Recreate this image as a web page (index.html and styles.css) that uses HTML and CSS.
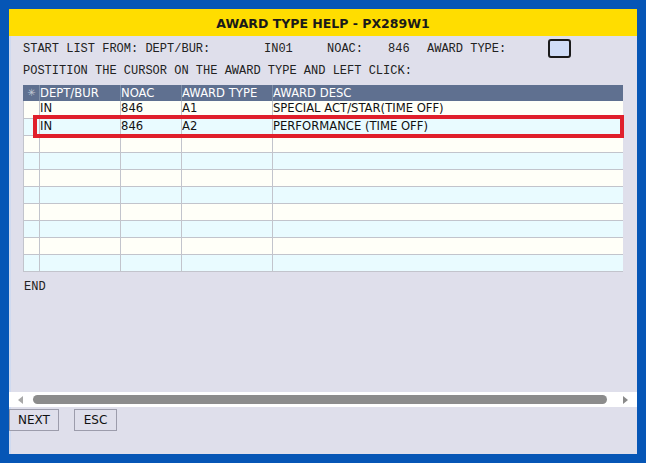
FILE: index.html
```html
<!DOCTYPE html>
<html>
<head>
<meta charset="utf-8">
<link rel="stylesheet" href="styles.css">
</head>
<body>
<div class="panel">
  <div class="title">AWARD TYPE HELP - PX289W1</div>
  <div class="info">
    <div class="line1">
      <span class="l1">START LIST FROM: DEPT/BUR:</span>
      <span class="v1">IN01</span>
      <span class="l2">NOAC:</span>
      <span class="v2">846</span>
      <span class="l3">AWARD TYPE:</span>
      <span class="box"></span>
    </div>
    <div class="line2">POSTITION THE CURSOR ON THE AWARD TYPE AND LEFT CLICK:</div>
  </div>
  <div class="gridwrap">
    <table class="grid">
      <colgroup><col class="c0"><col class="c1"><col class="c2"><col class="c3"><col class="c4"></colgroup>
      <thead>
        <tr><th class="star">✳</th><th>DEPT/BUR</th><th>NOAC</th><th>AWARD TYPE</th><th>AWARD DESC</th></tr>
      </thead>
      <tbody>
        <tr><td></td><td>IN</td><td>846</td><td>A1</td><td>SPECIAL ACT/STAR(TIME OFF)</td></tr>
        <tr><td></td><td>IN</td><td>846</td><td>A2</td><td>PERFORMANCE (TIME OFF)</td></tr>
        <tr><td></td><td></td><td></td><td></td><td></td></tr>
        <tr><td></td><td></td><td></td><td></td><td></td></tr>
        <tr><td></td><td></td><td></td><td></td><td></td></tr>
        <tr><td></td><td></td><td></td><td></td><td></td></tr>
        <tr><td></td><td></td><td></td><td></td><td></td></tr>
        <tr><td></td><td></td><td></td><td></td><td></td></tr>
        <tr><td></td><td></td><td></td><td></td><td></td></tr>
        <tr><td></td><td></td><td></td><td></td><td></td></tr>
      </tbody>
    </table>
    <div class="highlight"></div>
  </div>
  <div class="end">END</div>
  <div class="spacer"></div>
  <div class="hscroll">
    <svg class="arr" width="8" height="10" viewBox="0 0 8 10"><polygon points="6,1 6,9 1,5" fill="#a8a8a8"/></svg>
    <div class="thumb"></div>
    <svg class="arr" width="8" height="10" viewBox="0 0 8 10"><polygon points="2,1 2,9 7,5" fill="#8a8a8a"/></svg>
  </div>
  <div class="buttons">
    <button class="btn next">NEXT</button>
    <button class="btn esc">ESC</button>
  </div>
</div>
</body>
</html>
```
FILE: styles.css
```css
html, body {
  margin: 0;
  padding: 0;
}
body {
  background: #0656b6;
  padding: 9px;
  width: 646px;
  height: 463px;
  box-sizing: border-box;
  overflow: hidden;
}
.panel {
  width: 628px;
  height: 445px;
  background: #dfdfeb;
  display: flex;
  flex-direction: column;
  box-shadow: inset 2px 0 0 #cfdaf0;
  padding-bottom: 23px;
  box-sizing: border-box;
}
.title {
  height: 27px;
  background: #ffdd00;
  display: flex;
  align-items: center;
  justify-content: center;
  font-family: "DejaVu Sans", Verdana, sans-serif;
  font-weight: bold;
  font-size: 12.5px;
  color: #1a1a1a;
  padding-top: 1px;
  box-sizing: border-box;
}
.info {
  padding-left: 14px;
  font-family: "Liberation Mono", "Courier New", monospace;
  font-size: 12px;
  color: #222;
}
.line1 {
  margin-top: 3px;
  height: 19px;
  display: flex;
  align-items: center;
}
.line1 span { display: inline-block; white-space: pre; }
.l1 { width: 241px; }
.v1 { width: 63px; }
.l2 { width: 61px; }
.v2 { width: 39px; }
.l3 { width: 121px; }
.box {
  width: 23px;
  height: 19px;
  box-sizing: border-box;
  border: 2px solid #1b1b1b;
  border-radius: 3px;
  background: #d0ddf7;
}
.line2 {
  margin-top: 6px;
  height: 14px;
  line-height: 14px;
}
.gridwrap {
  position: relative;
  margin: 7px 0 0 14px;
  width: 599px;
}
.grid {
  border-collapse: collapse;
  table-layout: fixed;
  width: 599px;
  font-family: "DejaVu Sans", Verdana, sans-serif;
  font-size: 11.6px;
}
.c0 { width: 16px; }
.c1 { width: 81px; }
.c2 { width: 61px; }
.c3 { width: 91px; }
.c4 { width: 350px; }
.grid thead tr { height: 16px; }
.grid tbody tr { height: 17px; }
.grid th {
  background: #5f7090;
  color: #ffffff;
  font-weight: normal;
  text-align: left;
  padding: 0;
  line-height: 16px;
  border-left: 1px solid #8090a8;
  white-space: nowrap;
  overflow: hidden;
}
.grid th:first-child { border-left: 1px solid #5f7090; }
.grid th.star {
  color: #c0c7d4;
  font-size: 10px;
  text-align: center;
}
.grid td {
  padding: 0;
  line-height: 15px;
  border-bottom: 1px solid #c2c4cc;
  border-left: 1px solid #c2c4cc;
  color: #111;
  white-space: nowrap;
  overflow: hidden;
  vertical-align: top;
}
.grid tbody tr:nth-child(odd) td { background: #fffff8; }
.grid tbody tr:nth-child(even) td { background: #e9fbff; }
.highlight {
  position: absolute;
  left: 10px;
  top: 30px;
  width: 591px;
  height: 23px;
  border: 4px solid #e01f2b;
  box-sizing: border-box;
}
.end {
  margin: 8px 0 0 15px;
  font-family: "Liberation Mono", "Courier New", monospace;
  font-size: 12px;
  color: #222;
  line-height: 14px;
}
.spacer { flex: 1; }
.hscroll {
  height: 15px;
  background: #ffffff;
  display: flex;
  align-items: center;
  padding: 0 8px;
  gap: 8px;
}
.thumb {
  flex: 1;
  height: 9px;
  border-radius: 5px;
  background: #8c8c8c;
  margin-right: 6px;
}
.buttons {
  margin-top: 2px;
  display: flex;
  gap: 15px;
}
.btn {
  height: 22px;
  margin: 0;
  padding: 0;
  background: #dfdfeb;
  border: 1px solid #9c9cab;
  font-family: "DejaVu Sans", Verdana, sans-serif;
  font-size: 12px;
  color: #111;
}
.next { width: 50px; }
.esc { width: 43px; }
```
